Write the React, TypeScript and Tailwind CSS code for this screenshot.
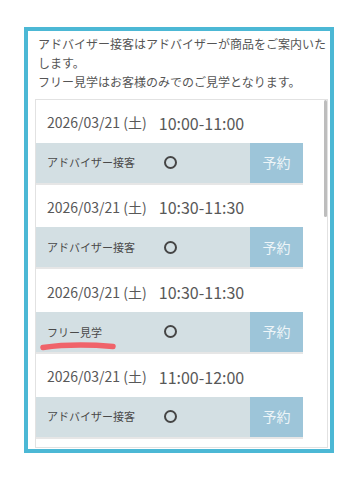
import React from 'react';

type Slot = {
  date: string;
  time: string;
  kind: string;
  marked?: boolean;
};

const slots: Slot[] = [
  { date: '2026/03/21 (土)', time: '10:00-11:00', kind: 'アドバイザー接客' },
  { date: '2026/03/21 (土)', time: '10:30-11:30', kind: 'アドバイザー接客' },
  { date: '2026/03/21 (土)', time: '10:30-11:30', kind: 'フリー見学', marked: true },
  { date: '2026/03/21 (土)', time: '11:00-12:00', kind: 'アドバイザー接客' },
];

function SlotCard({ slot }: { slot: Slot }) {
  return (
    <div className="w-[267px] border-b-2 border-[#e6e6e6]">
      {/* date + time */}
      <div className="h-[42.67px] flex items-center pl-[11px] pt-[3px] text-[#585858]">
        <span className="text-[14px]">{slot.date}</span>
        <span className="ml-[12px] text-[16px]">{slot.time}</span>
      </div>
      {/* kind / status / button */}
      <div className="relative h-[40px] flex items-stretch bg-[#d3dfe3]">
        <div className="w-[128px] pl-[11px] flex items-center text-[11px] text-[#4a4a4a]">
          {slot.kind}
        </div>
        <div className="flex items-center">
          <span className="block w-[13px] h-[13px] rounded-full border-[2.5px] border-[#454545]" />
        </div>
        <div className="flex-1" />
        <button className="w-[53px] bg-[#9dc5d9] text-[14px] text-[#eef5f8]">予約</button>
        {slot.marked && (
          <svg
            className="absolute left-[3px] top-[28px]"
            width="78"
            height="12"
            viewBox="0 0 78 12"
          >
            <path
              d="M4 7.5 C 22 5, 50 4.5, 74 6.5"
              fill="none"
              stroke="#f0636a"
              strokeWidth="5.5"
              strokeLinecap="round"
            />
          </svg>
        )}
      </div>
    </div>
  );
}

export default function App() {
  return (
    <div
      className="min-h-[489px] bg-white pt-[27px] pl-[24px]"
      style={{ fontFamily: '"Noto Sans CJK JP", "Noto Sans", sans-serif' }}
    >
      <div className="w-[310px] h-[426px] border-4 border-[#4cb8d5] overflow-hidden">
        <p className="pl-[10px] pt-[3px] text-[12px] leading-[19px] text-[#555]">
          アドバイザー接客はアドバイザーが商品をご案内いたします。
          <br />
          フリー見学はお客様のみでのご見学となります。
        </p>

        {/* reservation list */}
        <div className="relative mt-[8px] ml-[7px] w-[293px] h-[349px] border border-[#e2e2e2] overflow-hidden">
          {slots.map((s, i) => (
            <SlotCard key={i} slot={s} />
          ))}
          {/* scroll thumb */}
          <div className="absolute right-0 top-0 w-[3px] h-[117px] rounded-full bg-[#bdbdbd]" />
        </div>
      </div>
    </div>
  );
}
